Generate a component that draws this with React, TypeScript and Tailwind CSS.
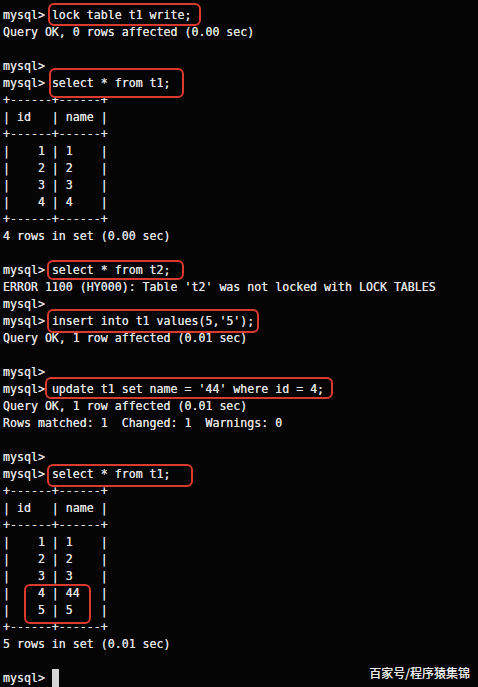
const P = "mysql> ";

type Box = { text: string; box: string };

const boxed: Record<number, Box> = {
  0: { text: "lock table t1 write;", box: "-left-[4px] -right-[10px] -top-[4px] -bottom-[2px]" },
  4: { text: "select * from t1;", box: "-left-[3px] -right-[13px] -top-[7px] -bottom-[6px]" },
  15: { text: "select * from t2;", box: "-left-[5px] -right-[13px] -top-[2px] -bottom-[1px]" },
  18: { text: "insert into t1 values(5,'5');", box: "-left-[5px] -right-[5px] -top-[4px] -bottom-[3px]" },
  22: { text: "update t1 set name = '44' where id = 4;", box: "-left-[7px] -right-[9px] -top-[4px] -bottom-[1px]" },
  27: { text: "select * from t1;", box: "-left-[5px] -right-[22px] -top-[2px] -bottom-[4px]" },
};

const lines: string[] = [
  "",
  "Query OK, 0 rows affected (0.00 sec)",
  "",
  "mysql>",
  "",
  "+------+------+",
  "| id   | name |",
  "+------+------+",
  "|    1 | 1    |",
  "|    2 | 2    |",
  "|    3 | 3    |",
  "|    4 | 4    |",
  "+------+------+",
  "4 rows in set (0.00 sec)",
  "",
  "",
  "ERROR 1100 (HY000): Table 't2' was not locked with LOCK TABLES",
  "mysql>",
  "",
  "Query OK, 1 row affected (0.01 sec)",
  "",
  "mysql>",
  "",
  "Query OK, 1 row affected (0.01 sec)",
  "Rows matched: 1  Changed: 1  Warnings: 0",
  "",
  "mysql>",
  "",
  "+------+------+",
  "| id   | name |",
  "+------+------+",
  "|    1 | 1    |",
  "|    2 | 2    |",
  "|    3 | 3    |",
];

const Line = ({ children }: { children?: React.ReactNode }) => (
  <div className="h-[17px] leading-[17px] whitespace-pre">{children}</div>
);

const App = () => {
  return (
    <div
      className="w-[478px] h-[687px] overflow-hidden bg-[#050505] text-[#e2e2e2] text-[11.6px] pt-[7px] px-[3px] [text-shadow:0_0_0.5px_#e2e2e2]"
      style={{ fontFamily: '"DejaVu Sans Mono", "Liberation Mono", monospace' }}
    >
      {lines.map((l, i) => {
        const b = boxed[i];
        if (b) {
          return (
            <Line key={i}>
              {P}
              <span className="relative inline-block h-[17px]">
                <span className={`absolute ${b.box} border-2 border-[#dc3a2e] rounded-[6px]`} />
                {b.text}
              </span>
            </Line>
          );
        }
        return <Line key={i}>{l}</Line>;
      })}

      {/* highlighted rows */}
      <div className="relative">
        <span className="absolute left-[21px] w-[67px] -top-[1px] -bottom-[5px] border-2 border-[#dc3a2e] rounded-[6px]" />
        <Line>{"|    4 | 44   |"}</Line>
        <Line>{"|    5 | 5    |"}</Line>
      </div>

      <Line>{"+------+------+"}</Line>
      <Line>{"5 rows in set (0.01 sec)"}</Line>
      <Line />
      <div className="h-[17px] leading-[17px] flex items-center justify-between whitespace-pre">
        <span className="flex items-center">
          {P}
          <span className="inline-block w-[7px] h-[19px] bg-[#d4d4d4]" />
        </span>
        <span
          className="text-[12px] text-[#ececec] pr-[5px] -mt-[13px]"
          style={{ fontFamily: '"Noto Sans CJK SC", sans-serif' }}
        >
          百家号/程序猿集锦
        </span>
      </div>
    </div>
  );
};

export default App;
